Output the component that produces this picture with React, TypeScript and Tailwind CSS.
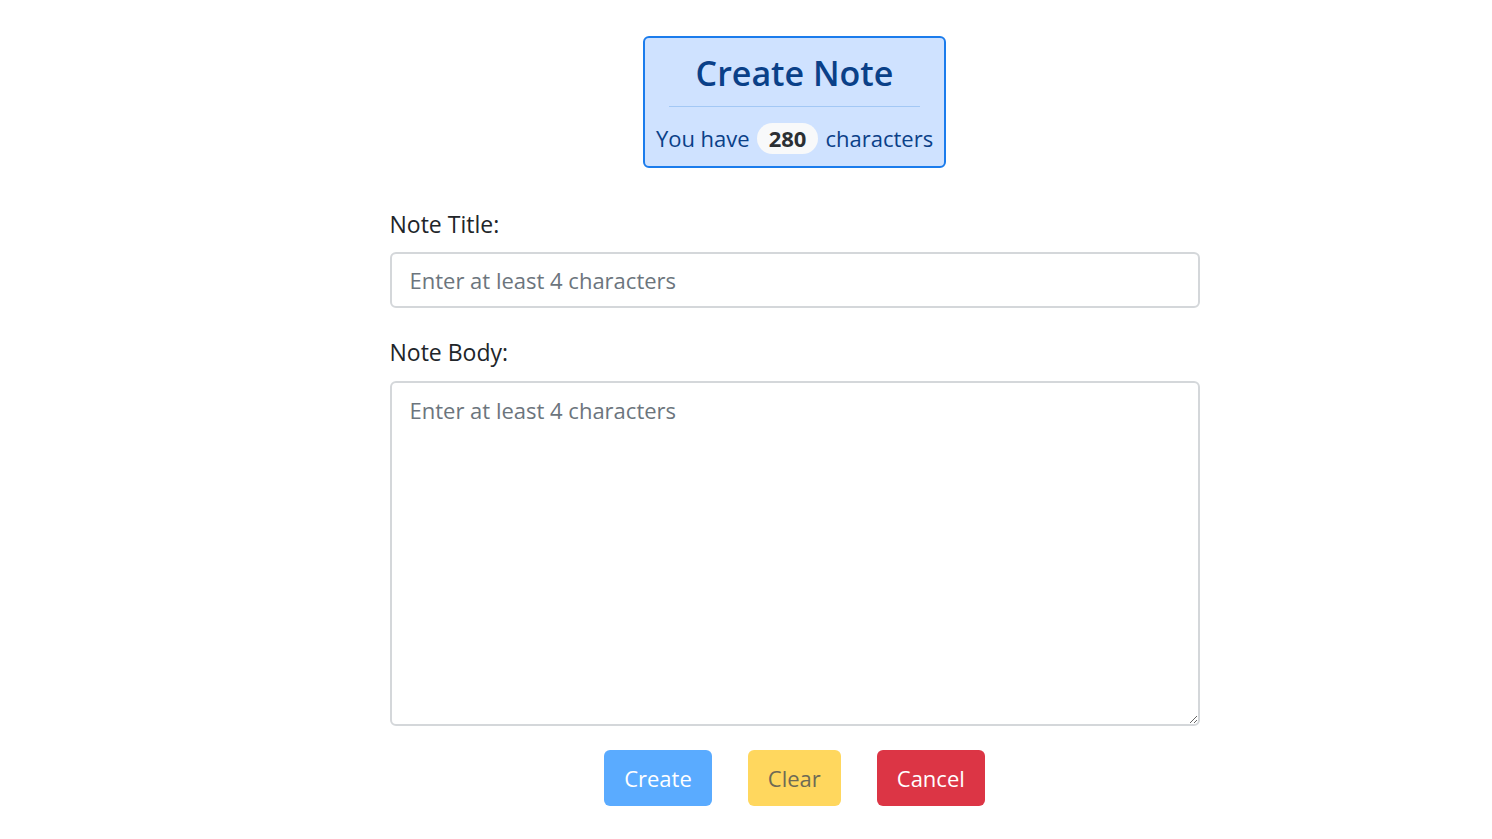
import React, { useState } from "react"

const MAX = 280

export default function App() {
  const [title, setTitle] = useState("")
  const [body, setBody] = useState("")

  return (
    <div className="min-h-screen bg-white flex justify-center pl-[97px] font-['Open_Sans',sans-serif] text-[#212529]">
      <div className="w-[810px] flex flex-col">
        <div className="self-center mt-[36px] rounded-[6px] border-2 border-[#1b7cec] bg-[#cfe2ff] px-[11px] pt-[13px] pb-[10px] text-[#0a4088]">
          <h2 className="text-center text-[34px] leading-[44px] font-semibold">Create Note</h2>
          <hr className="mx-[13px] mt-[11px] mb-[14px] border-0 border-t border-[#a3c8f5]" />
          <p className="flex items-center justify-center text-[22px] leading-[35px]">
            <span>You have</span>
            <span className="mx-[7px] rounded-full bg-[#f8f9fa] px-[12px] h-[31px] flex items-center text-[22px] font-bold text-[#2b2f33]">
              {MAX - title.length - body.length}
            </span>
            <span>characters</span>
          </p>
        </div>

        <label htmlFor="title" className="mt-[39px] text-[23px] leading-[35px]">
          Note Title:
        </label>
        <input
          id="title"
          value={title}
          onChange={(e) => setTitle(e.target.value)}
          placeholder="Enter at least 4 characters"
          className="mt-[10px] h-[56px] w-full rounded-[6px] border-2 border-[#d4d7da] px-[18px] text-[22px] outline-none placeholder:text-[#6c757d]"
        />

        <label htmlFor="body" className="mt-[27px] text-[23px] leading-[35px]">
          Note Body:
        </label>
        <textarea
          id="body"
          value={body}
          onChange={(e) => setBody(e.target.value)}
          placeholder="Enter at least 4 characters"
          className="mt-[11px] h-[345px] w-full rounded-[6px] border-2 border-[#d4d7da] px-[18px] py-[10px] text-[22px] leading-[35px] outline-none placeholder:text-[#6c757d]"
        />

        <div className="mt-[24px] flex justify-center gap-[36px]">
          <button className="h-[56px] rounded-[6px] bg-[#5aabff] px-[20px] text-[22px] text-white">
            Create
          </button>
          <button className="h-[56px] rounded-[6px] bg-[#ffd75e] px-[20px] text-[22px] text-[#6e6a55]">
            Clear
          </button>
          <button className="h-[56px] rounded-[6px] bg-[#dc3545] px-[20px] text-[22px] text-white">
            Cancel
          </button>
        </div>
      </div>
    </div>
  )
}
